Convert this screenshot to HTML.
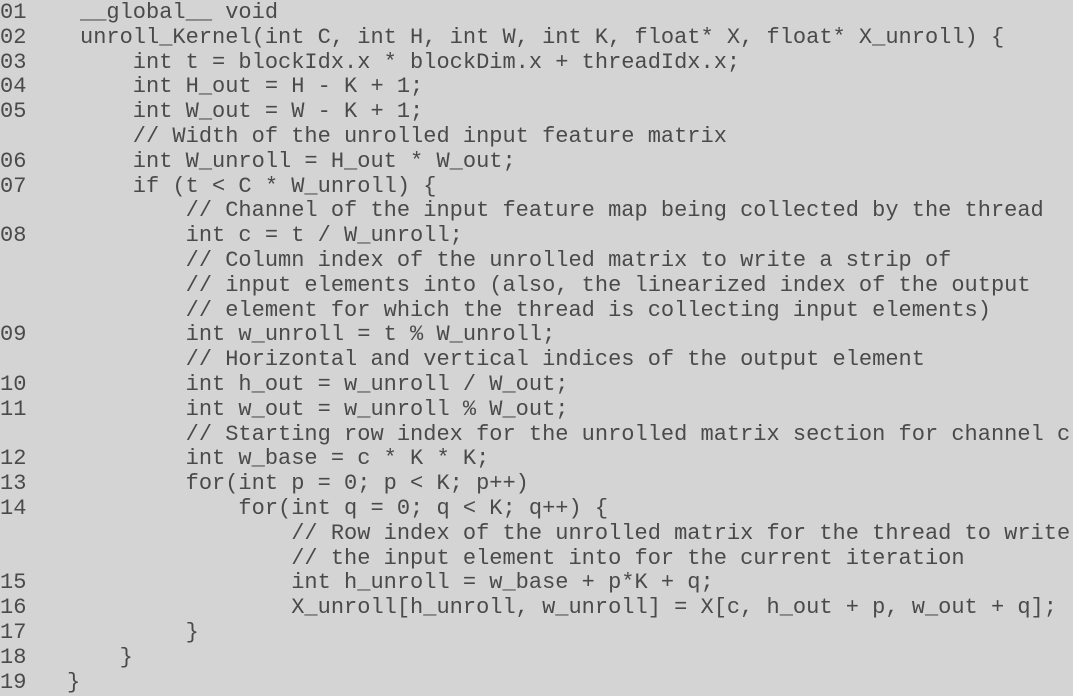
<!DOCTYPE html>
<html><head><meta charset="utf-8"><style>
html,body{margin:0;padding:0;background:#d4d4d4;width:1073px;height:691px;overflow:hidden}
.n{position:absolute;left:0;top:1px;font-family:"Liberation Mono",monospace;font-size:22px;line-height:24.8px;color:#4a4a4a;white-space:pre;margin:0}
.c{left:80px}
.b{left:67px;top:671px}
</style></head><body>
<pre class="n">01
02
03
04
05

06
07

08



09

10
11

12
13
14


15
16
17
18
19</pre>
<pre class="n c">__global__ void
unroll_Kernel(int C, int H, int W, int K, float* X, float* X_unroll) {
    int t = blockIdx.x * blockDim.x + threadIdx.x;
    int H_out = H - K + 1;
    int W_out = W - K + 1;
    // Width of the unrolled input feature matrix
    int W_unroll = H_out * W_out;
    if (t < C * W_unroll) {
        // Channel of the input feature map being collected by the thread
        int c = t / W_unroll;
        // Column index of the unrolled matrix to write a strip of
        // input elements into (also, the linearized index of the output
        // element for which the thread is collecting input elements)
        int w_unroll = t % W_unroll;
        // Horizontal and vertical indices of the output element
        int h_out = w_unroll / W_out;
        int w_out = w_unroll % W_out;
        // Starting row index for the unrolled matrix section for channel c
        int w_base = c * K * K;
        for(int p = 0; p < K; p++)
            for(int q = 0; q < K; q++) {
                // Row index of the unrolled matrix for the thread to write
                // the input element into for the current iteration
                int h_unroll = w_base + p*K + q;
                X_unroll[h_unroll, w_unroll] = X[c, h_out + p, w_out + q];
        }
   }
</pre>
<pre class="n b">}</pre>
</body></html>
